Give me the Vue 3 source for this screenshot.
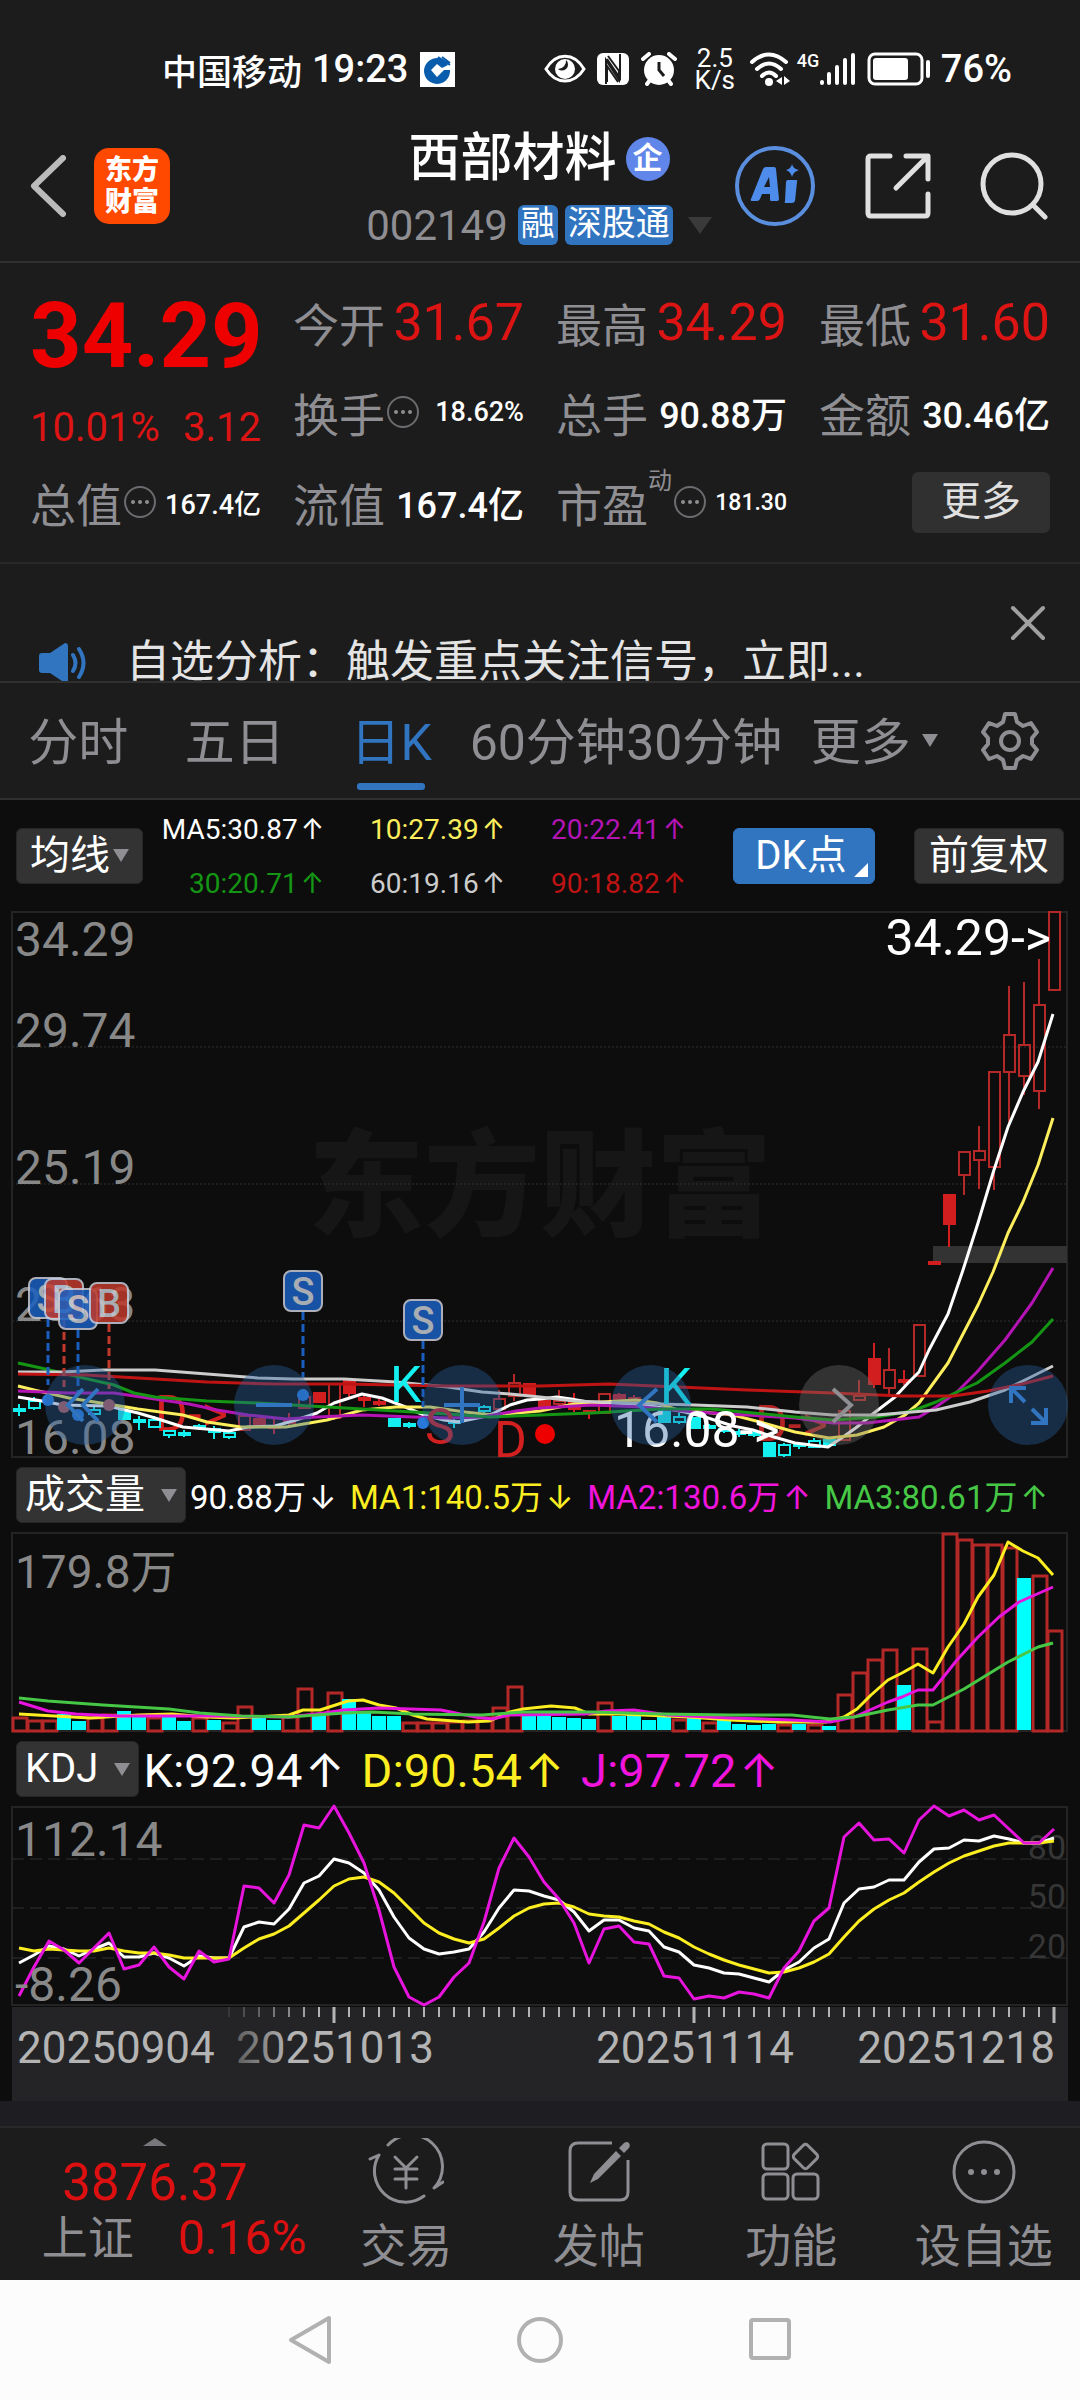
<script setup>
import { computed, ref } from 'vue'

const STEP = 15
const FIRST = 19
const slotX = (i) => FIRST + i * STEP
const toPoints = (list) => list.map(([x, y]) => `${x},${y}`).join(' ')

const quotes = [
  { label: '今开', value: '31.67', tone: 'up', size: 'lg' },
  { label: '最高', value: '34.29', tone: 'up', size: 'lg' },
  { label: '最低', value: '31.60', tone: 'up', size: 'lg' },
  { label: '换手', value: '18.62%', info: true, size: 'sm' },
  { label: '总手', value: '90.88万', size: 'md' },
  { label: '金额', value: '30.46亿', size: 'md' },
  { label: '总值', value: '167.4亿', info: true, size: 'sm' },
  { label: '流值', value: '167.4亿', size: 'md' },
  { label: '市盈', sup: '动', value: '181.30', info: true, size: 'xs' }
]

const tabs = ['分时', '五日', '日K', '60分钟', '30分钟', '更多']
const activeTab = ref('日K')

const averages = [
  { text: 'MA5:30.87', color: '#ffffff' },
  { text: '10:27.39', color: '#fcee5c' },
  { text: '20:22.41', color: '#b414b4' },
  { text: '30:20.71', color: '#149614' },
  { text: '60:19.16', color: '#cccccc' },
  { text: '90:18.82', color: '#c01414' }
]

const priceLabels = [
  { text: '34.29', y: 45 },
  { text: '29.74', y: 136 },
  { text: '25.19', y: 273 },
  { text: '20.63', y: 410 },
  { text: '16.08', y: 543 }
]

const priceLines = [
  { color: '#ffffff', pts: [[18,486],[48,491],[62,494],[108,495],[138,502],[155,507],[183,516],[229,520],[248,516],[275,515],[296,509],[317,502],[334,492],[362,483],[382,487],[403,495],[424,504],[444,509],[458,511],[482,506],[492,503],[510,494],[527,489],[540,488],[557,486],[571,488],[588,491],[612,492],[633,493],[657,496],[685,501],[705,506],[733,515],[753,519],[774,526],[795,532],[828,536],[843,526],[857,516],[874,502],[895,486],[908,472],[919,461],[929,439],[948,403],[963,359],[978,312],[993,262],[1008,216],[1023,181],[1038,151],[1053,103]] },
  { color: '#fcee5c', pts: [[18,475],[34,479],[69,487],[120,495],[138,498],[183,504],[207,511],[241,516],[286,516],[327,509],[362,499],[396,496],[430,496],[465,501],[492,504],[516,502],[540,500],[574,493],[602,491],[636,489],[657,492],[678,499],[702,501],[733,504],[760,511],[795,521],[829,527],[857,524],[884,516],[905,504],[919,492],[948,452],[978,394],[993,361],[1008,322],[1023,291],[1038,254],[1053,207]] },
  { color: '#b414b4', pts: [[18,480],[69,482],[114,482],[148,487],[189,493],[217,499],[248,504],[286,508],[317,506],[362,504],[413,506],[448,507],[482,506],[516,500],[540,497],[592,494],[643,496],[695,501],[747,504],[795,507],[833,512],[867,512],[919,506],[936,496],[957,481],[977,461],[1005,429],[1032,392],[1053,357]] },
  { color: '#149614', pts: [[18,452],[41,457],[79,466],[114,474],[134,482],[155,486],[207,490],[258,492],[310,495],[362,498],[413,501],[448,503],[489,506],[540,504],[592,502],[661,498],[712,498],[753,502],[795,506],[833,509],[877,506],[912,500],[936,491],[957,481],[977,472],[1005,452],[1032,431],[1053,408]] },
  { color: '#cccccc', pts: [[18,461],[62,461],[103,459],[155,459],[207,463],[258,467],[293,468],[344,468],[396,471],[448,476],[482,481],[510,483],[540,486],[574,490],[626,492],[695,494],[747,496],[795,501],[833,504],[877,504],[912,501],[936,499],[970,491],[1005,479],[1029,467],[1053,455]] },
  { color: '#c01414', pts: [[18,463],[86,464],[138,467],[207,471],[275,473],[344,473],[448,475],[540,475],[609,473],[678,476],[747,479],[833,482],[902,485],[953,485],[988,480],[1022,473],[1053,465]] }
]

// [slot, high, bodyTop, bodyBottom, low, kind]: r = rising, R = rising filled, c = falling, C = falling filled
const candles = [
  [0,493,498,500,505,'C'],[1,486,490,497,499,'c'],[5,496,499,503,508,'c'],[7,497,500,508,508,'C'],[8,505,509,511,519,'C'],
  [9,505,509,516,516,'c'],[10,519,520,524,527,'c'],[11,519,522,524,526,'C'],[12,513,515,517,519,'C'],[13,515,518,521,528,'c'],[14,519,522,526,528,'c'],
  [15,502,505,519,519,'r'],[16,505,508,515,515,'R'],[17,507,515,517,523,'R'],[18,502,508,512,514,'R'],[19,478,486,497,497,'r'],[20,481,482,491,491,'R'],
  [21,472,473,507,509,'r'],[22,467,469,482,486,'R'],[23,484,487,489,496,'R'],[24,488,491,493,495,'R'],[25,507,508,515,515,'C'],[26,511,513,515,517,'C'],
  [29,507,510,512,517,'C'],[31,494,496,500,502,'c'],[32,479,488,498,498,'r'],[33,463,472,485,490,'r'],[34,472,473,484,484,'R'],[35,488,490,495,495,'R'],
  [36,479,490,493,497,'r'],[37,482,489,498,501,'R'],[38,499,500,502,508,'R'],[39,482,483,502,502,'r'],[40,482,484,488,490,'R'],[41,484,487,490,492,'R'],
  [43,497,499,511,511,'C'],[44,502,506,511,513,'c'],[45,506,507,517,517,'C'],[46,513,515,517,518,'C'],[47,516,518,520,522,'C'],[48,518,521,523,526,'C'],
  [49,520,522,524,526,'C'],[50,532,532,545,545,'C'],[51,532,534,544,546,'c'],[52,532,533,535,538,'C'],[53,527,530,536,536,'c'],[54,528,529,534,534,'C'],
  [55,498,500,529,529,'r'],[56,469,485,489,489,'r'],[57,432,448,473,477,'R'],[58,437,459,477,483,'r'],[59,459,469,471,474,'R'],[60,413,414,465,465,'r'],
  [61,351,351,353,353,'R'],[62,284,284,313,336,'R'],[63,241,241,264,284,'r'],[64,215,240,249,278,'r'],[65,161,161,256,279,'r'],[66,75,124,161,211,'r'],
  [67,71,134,165,184,'r'],[68,48,94,180,198,'r'],[69,1,1,79,79,'r']
]
const candleColor = (kind) => (kind === 'r' ? '#b42828' : kind === 'R' ? '#d21e1e' : '#14f0f0')

const marks = [
  { x: 48, y: 367, t: 'S', end: 474, dot: 489 },
  { x: 64, y: 368, t: 'B', end: 476, dot: 496 },
  { x: 78, y: 378, t: 'S', end: 482, dot: 504 },
  { x: 109, y: 372, t: 'B', end: 478, dot: 494 },
  { x: 303, y: 360, t: 'S', end: 466, dot: 484 },
  { x: 423, y: 389, t: 'S', end: 496, dot: 512 }
]
const markColor = (t) => (t === 'S' ? '#1a5fc0' : '#c0392b')

const volumeInfo = [
  { text: '90.88万', arrow: '↓', color: '#ffffff' },
  { text: 'MA1:140.5万', arrow: '↓', color: '#fcee21' },
  { text: 'MA2:130.6万', arrow: '↑', color: '#f014dc' },
  { text: 'MA3:80.61万', arrow: '↑', color: '#46c846' }
]
const volY = (v) => Math.round((v - 245) / 3)
const volumes = '800r 808r 808r 790c 812c 800r 790r 783c 797c 800r 797c 812c 800r 808c 815r 768r 800c 810c 797r 713r 790c 725r 745c 785c 797c 797c 815r 815r 815r 812r 808r 800r 770r 707r 797c 797c 800c 802c 805c 755r 797c 795c 808c 797c 805r 803c 815r 810c 822c 825c 820c 820r 820c 820r 828c 732r 665r 627r 597r 705c 592r 812r 247r 267r 280r 282r 290r 383c 375r 540r'
  .split(' ')
  .map((s, i) => ({ x: slotX(i), y: volY(parseInt(s)), up: s.endsWith('r') }))
const volPoints = (list) => toPoints(list.map(([x, y]) => [Math.round(x / 1.452), volY(y)]))
const volumeLines = [
  { color: '#fcee21', pts: volPoints([[27,790],[130,803],[200,795],[250,790],[300,800],[340,803],[420,795],[440,778],[465,778],[505,752],[527,750],[550,765],[575,772],[600,795],[620,805],[680,815],[710,812],[740,785],[760,775],[800,768],[835,772],[855,792],[900,792],[1000,800],[1060,808],[1130,815],[1200,815],[1225,800],[1245,775],[1265,735],[1290,690],[1310,668],[1333,640],[1355,667],[1377,590],[1400,520],[1420,440],[1443,375],[1464,275],[1486,302],[1507,323],[1529,375]]) },
  { color: '#e614dc', pts: volPoints([[27,755],[70,782],[110,790],[170,797],[300,797],[420,800],[470,787],[500,778],[550,773],[640,778],[690,800],[715,805],[740,795],[850,790],[880,782],[920,778],[970,795],[1060,803],[1150,808],[1205,815],[1240,800],[1290,755],[1310,740],[1333,720],[1355,720],[1390,630],[1420,560],[1450,500],[1480,455],[1529,410]]) },
  { color: '#46c846', pts: volPoints([[27,742],[70,752],[150,763],[245,777],[290,788],[350,797],[420,800],[500,788],[540,785],[600,790],[700,793],[760,785],[860,786],[960,790],[1060,795],[1150,795],[1205,805],[1240,800],[1290,778],[1333,765],[1355,765],[1400,715],[1464,635],[1507,590],[1529,577]]) }
]

const kdjInfo = [
  { text: 'K:92.94', color: '#ffffff' },
  { text: 'D:90.54', color: '#fcee21' },
  { text: 'J:97.72', color: '#f014dc' }
]
const kdjPoints = (list) => toPoints(list.map((v, i) => [slotX(i), Math.round((v - 198) / 3)]))
const kdjLines = [
  { color: '#ffffff', pts: kdjPoints([670,645,618,628,648,628,608,652,652,640,655,678,648,655,655,560,546,552,508,430,407,357,370,400,450,530,595,627,642,636,627,575,505,450,453,467,480,515,572,541,540,563,572,622,635,675,685,698,703,715,726,690,667,625,598,490,447,440,420,420,365,328,324,300,302,288,297,308,308,293]) },
  { color: '#fcee21', pts: kdjPoints([625,632,628,630,633,632,625,633,638,640,645,654,655,655,653,625,598,582,558,518,480,438,417,412,425,460,505,550,580,597,608,598,565,527,503,491,490,500,522,527,531,543,552,577,595,622,642,660,675,688,698,696,685,665,643,590,543,508,480,458,427,395,370,347,332,318,310,308,308,302]) },
  { color: '#e614dc', pts: kdjPoints([768,680,602,630,670,625,580,688,675,622,680,718,632,665,658,438,443,490,405,255,265,198,278,370,510,680,770,795,770,710,668,545,385,295,350,425,478,550,670,567,557,605,612,708,714,778,768,773,755,762,773,685,632,543,505,290,250,300,298,338,240,198,228,210,240,225,268,308,308,268]) }
]

const ticks = computed(() =>
  Array.from({ length: 56 }, (_, k) => k + 14).map((i) => ({
    x: slotX(i),
    long: [21, 45, 69].includes(i),
    o: Math.min(1, (i - 13) / 7)
  }))
)
</script>

<template>
  <div class="page">
    <div class="status">
      <span class="carrier">中国移动</span>
      <span class="time">19:23</span>
      <svg class="bank" width="35" height="35" viewBox="0 0 35 35">
        <rect width="35" height="35" fill="#fff" />
        <path d="M24 8A13 13 0 1 0 30 18L24 18L17 25L11 18L17 12L22 16L28 13Z" fill="#0a5cad" />
        <path d="M18 5L30 13M22 5L30 11" stroke="#0a5cad" stroke-width="2" />
      </svg>
      <div class="sys">
        <svg width="42" height="30" viewBox="0 0 42 30">
          <path d="M2 15C12-2 30-2 40 15C30 31 12 31 2 15Z" fill="none" stroke="#fff" stroke-width="3" />
          <circle cx="21" cy="15" r="10" fill="#fff" />
          <path d="M22 6A6 6 0 1 1 14 15A8 8 0 0 0 22 6Z" fill="#1c1c1c" />
        </svg>
        <svg class="nfc" width="32" height="32" viewBox="0 0 32 32">
          <rect width="32" height="32" rx="6" fill="#fff" />
          <path d="M9 31V7L22 27V18L11 3M23 1V25L10 6M21 29L10 13V29" fill="none" stroke="#1c1c1c" stroke-width="2" />
        </svg>
        <svg class="alarm" width="36" height="34" viewBox="0 0 36 34">
          <circle cx="18" cy="18" r="15" fill="#fff" />
          <path d="M2 7L8 2M34 7L28 2M6 32L9 28M30 32L27 28" stroke="#fff" stroke-width="4" stroke-linecap="round" />
          <path d="M18 10V18L23 24" fill="none" stroke="#1c1c1c" stroke-width="3" />
        </svg>
        <span class="rate"><span>2.5</span><span>K/s</span></span>
        <svg class="wifi" width="42" height="36" viewBox="0 0 42 36">
          <g fill="none" stroke="#fff" stroke-width="4" stroke-linecap="round">
            <path d="M3 11Q20-4 37 11" /><path d="M8 18Q20 7 32 18" /><path d="M13 25Q20 18 27 25" />
          </g>
          <circle cx="20" cy="31" r="4" fill="#fff" />
          <path d="M33 26V34L27 30ZM35 34V25L41 30Z" fill="#fff" />
        </svg>
        <span class="net">4G</span>
        <svg width="36" height="34" viewBox="0 0 36 34">
          <path d="M3 30V31M10 22V31M18 15V31M26 8V31M34 3V31" stroke="#fff" stroke-width="4" stroke-linecap="round" />
        </svg>
        <svg class="battery" width="64" height="34" viewBox="0 0 64 34">
          <rect x="2" y="2" width="53" height="30" rx="6" fill="none" stroke="#fff" stroke-width="3" />
          <rect x="6" y="6" width="35" height="22" rx="3" fill="#fff" />
          <path d="M61 10V24" stroke="#fff" stroke-width="4" stroke-linecap="round" />
        </svg>
        <span class="pct">76%</span>
      </div>
    </div>

    <header class="head">
      <div class="head-left">
        <button class="plain" aria-label="返回">
          <svg width="36" height="62" viewBox="0 0 36 62"><path d="M33 3L4 31L33 59" fill="none" stroke="#bbb" stroke-width="6" stroke-linecap="round" stroke-linejoin="round" /></svg>
        </button>
        <a class="logo" href="#"><span>东方</span><span>财富</span></a>
      </div>
      <div class="title">
        <h1>西部材料<span class="corp">企</span></h1>
        <div class="code"><span class="num">002149</span><span class="tag">融</span><span class="tag">深股通</span><i class="tri"></i></div>
      </div>
      <div class="head-right">
        <button class="plain" aria-label="Ai">
          <svg width="82" height="82" viewBox="0 0 82 82">
            <circle cx="41" cy="41" r="38" fill="none" stroke="#5a8fe0" stroke-width="4" />
            <path d="M17 54L29 24Q30 22 32 22H40Q42 22 42 24L45 54Q45 56 43 56H37Q36 56 36 54V49H28L26 54Q25 56 23 56H18Q16 56 17 54ZM30 42H36L35 32Z" fill="#4e8cec" />
            <path d="M54 35H62Q64 35 63 37L61 56Q60 58 58 58H52Q50 58 51 56L52 37Q52 35 54 35ZM58 19Q59 24 65 25Q59 27 58 32Q57 27 52 25Q57 24 58 19Z" fill="#4e8cec" />
          </svg>
        </button>
        <button class="plain" aria-label="分享">
          <svg width="66" height="66" viewBox="0 0 66 66"><path d="M25 3H6Q3 3 3 6V60Q3 63 6 63H60Q63 63 63 60V41M41 3H63V26M62 4L31 35" fill="none" stroke="#e0e0e0" stroke-width="5" stroke-linecap="round" stroke-linejoin="round" /></svg>
        </button>
        <button class="plain" aria-label="搜索">
          <svg width="68" height="68" viewBox="0 0 68 68"><circle cx="32" cy="32" r="29" fill="none" stroke="#e0e0e0" stroke-width="5" /><path d="M53 53L65 65" stroke="#e0e0e0" stroke-width="5" stroke-linecap="round" /></svg>
        </button>
      </div>
    </header>

    <section class="quote">
      <div class="price">
        <strong>34.29</strong>
        <div class="change"><span>10.01%</span><span>3.12</span></div>
      </div>
      <div v-for="(q, i) in quotes" :key="i" class="cell">
        <span class="label">{{ q.label }}<sup v-if="q.sup">{{ q.sup }}</sup></span>
        <svg v-if="q.info" class="info" width="34" height="34" viewBox="0 0 34 34">
          <circle cx="17" cy="17" r="15" fill="none" stroke="#6c6c70" stroke-width="2" />
          <g fill="#8e8e93"><circle cx="10" cy="17" r="2" /><circle cx="17" cy="17" r="2" /><circle cx="24" cy="17" r="2" /></g>
        </svg>
        <span class="value" :class="[q.size, q.tone]">{{ q.value }}</span>
      </div>
      <div class="cell"><button class="more">更多</button></div>
    </section>

    <section class="notice">
      <svg class="speaker" width="50" height="40" viewBox="0 0 50 40">
        <path d="M3 10H11L26 0Q29 0 29 3V37Q29 40 26 40L11 30H3Q0 30 0 27V13Q0 10 3 10Z" fill="#3174c0" />
        <path d="M34 12Q39 20 34 28M40 6Q49 20 40 34" fill="none" stroke="#3174c0" stroke-width="4" stroke-linecap="round" />
      </svg>
      <a class="notice-text" href="#">自选分析：触发重点关注信号，立即...</a>
      <button class="plain close" aria-label="关闭">
        <svg width="36" height="36" viewBox="0 0 36 36"><path d="M3 3L33 33M33 3L3 33" stroke="#a0a0a0" stroke-width="4" stroke-linecap="round" /></svg>
      </button>
    </section>

    <nav class="tabs">
      <button v-for="t in tabs" :key="t" class="tab" :class="{ on: t === activeTab }" @click="activeTab = t">
        {{ t }}<i v-if="t === '更多'" class="caret"></i>
      </button>
      <button class="gear" aria-label="设置">
        <svg width="60" height="60" viewBox="0 0 60 60" fill="none" stroke="#8e8e93" stroke-width="4" stroke-linejoin="round">
          <path d="M25 3H35L37 11L43 15L51 12L57 21L52 27V33L57 39L51 48L43 45L37 49L35 57H25L23 49L17 45L9 48L3 39L8 33V27L3 21L9 12L17 15L23 11Z" />
          <circle cx="30" cy="30" r="9" />
        </svg>
      </button>
    </nav>

    <main class="board">
      <div class="ma-bar">
        <button class="chip ma">均线<i class="drop"></i></button>
        <div class="ma-grid">
          <span v-for="m in averages" :key="m.text" :style="{ color: m.color }">{{ m.text }}<b class="arr">↑</b></span>
        </div>
        <button class="chip dk">DK点</button>
        <button class="chip right">前复权</button>
      </div>

      <div class="chart">
        <svg class="plot" viewBox="0 0 1080 547">
          <text class="mark-water" x="540" y="316" text-anchor="middle">东方财富</text>
          <g stroke="#303030" stroke-width="1" stroke-dasharray="2 2"><path d="M12 136H1067M12 273H1067M12 410H1067" /></g>
          <rect x="12" y="1" width="1055" height="545" fill="none" stroke="#242424" stroke-width="2" />
          <rect x="933" y="335" width="134" height="17" fill="#333" />
          <g class="axis"><text v-for="l in priceLabels" :key="l.text" x="15" :y="l.y">{{ l.text }}</text></g>
          <g class="sig">
            <text x="155" y="520" fill="#d22020">D-&gt;</text>
            <text x="755" y="530" fill="#b42424">D-&gt;</text>
          </g>
          <g v-for="c in candles" :key="c[0]" :stroke="candleColor(c[5])" stroke-width="2" :fill="c[5] === 'R' || c[5] === 'C' ? candleColor(c[5]) : 'none'">
            <path :d="`M${slotX(c[0])} ${c[1]}V${c[2]}M${slotX(c[0])} ${c[3]}V${c[4]}`" />
            <rect :x="slotX(c[0]) - 5" :y="c[2]" width="11" :height="c[3] - c[2]" />
          </g>
          <polyline v-for="l in priceLines" :key="l.color" :points="toPoints(l.pts)" fill="none" :stroke="l.color" stroke-width="3" stroke-linejoin="round" />
          <g v-for="m in marks" :key="m.x">
            <path :d="`M${m.x} ${m.y + 41}V${m.end}`" :stroke="markColor(m.t)" stroke-width="3" stroke-dasharray="8 4" />
            <circle :cx="m.x" :cy="m.dot" r="6" :fill="m.t === 'S' ? '#2878dc' : '#b45a5a'" />
            <g opacity="0.85">
              <rect :x="m.x - 19" :y="m.y" width="38" height="40" rx="7" :fill="markColor(m.t)" stroke="#c8ccd8" stroke-width="2" />
              <text class="badge" :x="m.x" :y="m.y + 34" text-anchor="middle">{{ m.t }}</text>
            </g>
          </g>
          <g class="sig">
            <text x="390" y="491" fill="#14f0f0">K</text>
            <text x="660" y="493" fill="#14f0f0">K</text>
            <text x="425" y="533" fill="#d22020">S</text>
            <text x="494" y="546" fill="#d22020">D</text>
            <circle cx="545" cy="523" r="10" fill="#ee0000" />
            <text x="614" y="536" fill="#fff">16.08-&gt;</text>
            <text x="1051" y="44" text-anchor="end" fill="#fff">34.29-&gt;</text>
          </g>
        </svg>
        <div class="tools">
          <button aria-label="快退"><svg viewBox="0 0 80 80"><path d="M38 24L23 40L38 56M53 24L38 40L53 56" /></svg></button>
          <button aria-label="缩小"><svg viewBox="0 0 80 80"><path d="M22 40H58" /></svg></button>
          <button aria-label="放大"><svg viewBox="0 0 80 80"><path d="M22 40H58M40 22V58" /></svg></button>
          <button aria-label="左移"><svg viewBox="0 0 80 80"><path d="M46 24L28 40L46 57" /></svg></button>
          <button aria-label="右移" class="dim"><svg viewBox="0 0 80 80"><path d="M34 24L52 40L34 57" /></svg></button>
          <button aria-label="全屏"><svg viewBox="0 0 80 80"><path d="M23 38V23H38M24 24L37 37M58 43V58H43M57 57L44 44" /></svg></button>
        </div>
      </div>

      <div class="ind-bar">
        <button class="chip ind">成交量<i class="drop"></i></button>
        <div class="vol-list"><span v-for="v in volumeInfo" :key="v.text" :style="{ color: v.color }">{{ v.text }}<b class="arr">{{ v.arrow }}</b></span></div>
      </div>
      <svg class="plot" viewBox="0 0 1080 200">
        <rect x="12" y="1" width="1055" height="198" fill="none" stroke="#242424" stroke-width="2" />
        <g class="axis amount"><text x="15" y="56">179.8万</text></g>
        <template v-for="v in volumes" :key="v.x">
          <rect v-if="v.up" :x="v.x - 6" :y="v.y + 1" width="14" :height="198 - v.y" fill="none" stroke="#b42828" stroke-width="3" />
          <rect v-else :x="v.x - 7" :y="v.y" width="14" :height="198 - v.y" fill="#00ffff" />
        </template>
        <polyline v-for="l in volumeLines" :key="l.color" :points="l.pts" fill="none" :stroke="l.color" stroke-width="3" stroke-linejoin="round" />
      </svg>

      <div class="ind-bar">
        <button class="chip ind">KDJ<i class="drop"></i></button>
        <div class="kdj-list"><span v-for="k in kdjInfo" :key="k.text" :style="{ color: k.color }">{{ k.text }}<b class="arr">↑</b></span></div>
      </div>
      <svg class="plot" viewBox="0 0 1080 201">
        <rect x="12" y="1" width="1055" height="198" fill="none" stroke="#242424" stroke-width="2" />
        <path d="M12 53H1067M12 102H1067M12 152H1067" stroke="#303030" stroke-width="1" stroke-dasharray="12 6" />
        <g class="level"><text x="1066" y="53">80</text><text x="1066" y="102">50</text><text x="1066" y="152">20</text></g>
        <g class="axis"><text x="15" y="50">112.14</text></g>
        <polyline v-for="l in kdjLines" :key="l.color" :points="l.pts" fill="none" :stroke="l.color" stroke-width="3" stroke-linejoin="round" />
        <g class="axis"><text x="15" y="195">-8.26</text></g>
      </svg>
      <svg class="plot" viewBox="0 0 1080 94">
        <defs>
          <linearGradient id="fade" gradientUnits="userSpaceOnUse" x1="225" y1="0" x2="290" y2="0">
            <stop offset="0" stop-color="#4c4c4e" /><stop offset="1" stop-color="#b4b4b4" />
          </linearGradient>
        </defs>
        <rect x="12" y="0" width="1056" height="94" fill="#242426" />
        <path v-for="t in ticks" :key="t.x" :d="`M${t.x} 0V${t.long ? 16 : 10}`" stroke="#b4b4b4" :stroke-width="t.long ? 3 : 2" :opacity="t.o" />
        <g class="date">
          <text x="17" y="56">20250904</text>
          <text x="335" y="56" text-anchor="middle" fill="url(#fade)">20251013</text>
          <text x="695" y="56" text-anchor="middle">20251114</text>
          <text x="1055" y="56" text-anchor="end">20251218</text>
        </g>
      </svg>
    </main>

    <div class="gap"></div>

    <nav class="dock">
      <a class="index" href="#">
        <i class="peak"></i>
        <span class="points">3876.37</span>
        <span class="index-row"><span class="name">上证</span><span class="rise">0.16%</span></span>
      </a>
      <a class="item" href="#">
        <svg width="76" height="68" viewBox="0 0 76 68" fill="none" stroke="#8e8e93" stroke-width="3" stroke-linecap="round" stroke-linejoin="round">
          <path d="M20 7A31 31 0 0 1 66 50L75 44M56 58A31 31 0 0 1 11 17L2 21" /><path d="M27 19L38 30L49 19M27 31H49M27 41H49M38 30V50" />
        </svg>
        <span>交易</span>
      </a>
      <a class="item" href="#">
        <svg width="64" height="68" viewBox="0 0 64 68">
          <path d="M45 5H11Q3 5 3 13V54Q3 62 11 62H53Q61 62 61 54V22" fill="none" stroke="#8e8e93" stroke-width="3" />
          <path d="M49 13L54 18L31 41L23 45L27 36ZM52 10L57 5Q60 3 62 5Q64 8 61 11L57 15Z" fill="#8e8e93" />
        </svg>
        <span>发帖</span>
      </a>
      <a class="item" href="#">
        <svg width="60" height="68" viewBox="0 0 60 68" fill="none" stroke="#8e8e93" stroke-width="3" stroke-linejoin="round">
          <rect x="2" y="6" width="25" height="25" rx="4" /><rect x="2" y="36" width="25" height="25" rx="4" /><rect x="32" y="36" width="25" height="25" rx="4" />
          <rect x="35" y="9" width="19" height="19" rx="3" transform="rotate(45 44.5 18.5)" />
        </svg>
        <span>功能</span>
      </a>
      <a class="item" href="#">
        <svg width="64" height="68" viewBox="0 0 64 68"><circle cx="32" cy="34" r="30" fill="none" stroke="#8e8e93" stroke-width="3" /><g fill="#8e8e93"><circle cx="19" cy="34" r="3" /><circle cx="32" cy="34" r="3" /><circle cx="45" cy="34" r="3" /></g></svg>
        <span>设自选</span>
      </a>
    </nav>

    <div class="sysnav">
      <button class="plain" aria-label="后退"><svg width="48" height="52" viewBox="0 0 48 52"><path d="M43 4V48L5 26Z" fill="none" stroke="#b1b1b1" stroke-width="4" stroke-linejoin="round" /></svg></button>
      <button class="plain" aria-label="主页"><svg width="48" height="52" viewBox="0 0 48 52"><circle cx="24" cy="26" r="21" fill="none" stroke="#b1b1b1" stroke-width="4" /></svg></button>
      <button class="plain" aria-label="最近"><svg width="48" height="52" viewBox="0 0 48 52"><rect x="5" y="6" width="38" height="38" rx="2" fill="none" stroke="#b1b1b1" stroke-width="4" /></svg></button>
    </div>
  </div>
</template>

<style>
body { background: #1c1c1c; }
</style>

<style scoped>
.page { width: 100%; background: #1c1c1c; color: #fff; font-family: Roboto, "Noto Sans CJK SC", sans-serif; overflow: hidden; }
.page * { box-sizing: border-box; }
.page svg { display: block; flex: none; }
button { font-family: inherit; color: inherit; border: 0; margin: 0; padding: 0; background: none; cursor: pointer; white-space: nowrap; }
a { color: inherit; text-decoration: none; }
i { font-style: normal; }

.status { display: flex; align-items: center; height: 110px; padding: 28px 68px 0 162px; font-weight: 500; white-space: nowrap; }
.carrier { font-size: 35px; }
.time { font-size: 38px; margin-left: 10px; }
.bank { margin-left: 12px; }
.sys { display: flex; align-items: center; margin-left: auto; }
.nfc { margin-left: 11px; }
.alarm { margin-left: 12px; }
.rate { display: flex; flex-direction: column; align-items: center; width: 40px; margin-left: 18px; font-size: 26px; line-height: 22px; font-weight: 400; }
.wifi { margin-left: 14px; }
.net { width: 22px; height: 34px; margin-left: 6px; font-size: 18px; line-height: 18px; }
.battery { margin-left: 12px; }
.pct { margin-left: 10px; font-size: 38px; }

.head { display: grid; grid-template-columns: 1fr auto 1fr; align-items: center; height: 153px; padding: 0 32px 0 30px; border-bottom: 2px solid #303030; }
.head-left { display: flex; align-items: center; gap: 28px; }
.logo { display: flex; flex-direction: column; align-items: center; justify-content: center; width: 76px; height: 76px; border-radius: 15px; background: #ff4800; font-size: 27px; line-height: 32px; font-weight: 900; }
.title { display: flex; flex-direction: column; align-items: center; padding-top: 9px; }
h1 { display: flex; align-items: center; gap: 9px; margin: 0; font-size: 52px; line-height: 70px; font-weight: 500; }
.corp { width: 44px; height: 44px; border-radius: 50%; background: #5f86e8; font-size: 30px; line-height: 42px; text-align: center; font-weight: 700; }
.code { display: flex; align-items: center; gap: 7px; height: 62px; }
.num { font-size: 42px; color: #8e8e93; margin-right: 3px; }
.tag { height: 40px; padding: 0 3px; border-radius: 6px; background: #3174c0; font-size: 34px; line-height: 37px; }
.tri { border: 12px solid transparent; border-top: 17px solid #3a3a3a; border-bottom: 0; margin-left: 8px; }
.head-right { display: flex; align-items: center; justify-content: flex-end; gap: 49px; }

.quote { display: grid; grid-template-columns: repeat(4, minmax(0, 1fr)); grid-auto-rows: 90px; column-gap: 32px; padding: 14px 30px 15px; border-bottom: 2px solid #282828; }
.price { grid-row: span 2; color: #ee0000; padding-top: 12px; }
.price strong { display: block; font-size: 90px; line-height: 96px; font-weight: 700; white-space: nowrap; }
.change { display: flex; justify-content: space-between; margin-top: 19px; font-size: 40px; line-height: 48px; color: #dc1414; }
.cell { display: flex; align-items: center; white-space: nowrap; }
.label { position: relative; font-size: 46px; color: #8e8e93; }
.label sup { font-size: 24px; line-height: 24px; vertical-align: top; }
.info { margin-left: 1px; }
.value { margin-left: auto; }
.value.lg { font-size: 52px; }
.value.md { font-size: 36px; font-weight: 500; }
.value.sm { font-size: 27px; font-weight: 500; }
.value.xs { font-size: 23px; font-weight: 500; }
.value.up { color: #dc1414; }
.more { width: 138px; height: 61px; margin-left: auto; border-radius: 6px; background: #303030; color: #e0e0e0; font-size: 40px; line-height: 58px; }

.notice { display: flex; align-items: flex-start; height: 119px; padding: 0 34px 0 39px; overflow: hidden; border-bottom: 2px solid #303030; }
.speaker { margin-top: 79px; }
.notice-text { flex: 1; margin: 73px 0 0 37px; font-size: 44px; line-height: 50px; color: #e4e4e4; white-space: nowrap; }
.close { margin-top: 41px; }

.tabs { display: flex; height: 117px; border-bottom: 2px solid #303030; }
.tab { position: relative; flex: 1 1 0; min-width: 0; padding-bottom: 6px; font-size: 50px; color: #8e8e93; }
.tab.on { color: #3174c0; }
.tab.on::after { content: ""; position: absolute; left: 50%; bottom: 8px; width: 68px; height: 7px; margin-left: -34px; border-radius: 3px; background: #3174c0; }
.caret { position: absolute; left: 100%; top: 51px; margin-left: -17px; border: 8px solid transparent; border-top: 13px solid #8e8e93; border-bottom: 0; }
.gear { display: flex; align-items: center; justify-content: center; width: 141px; }

.board { background: #0d0d0d; }
.ma-bar { display: flex; align-items: center; height: 111px; padding: 0 16px; }
.chip { display: flex; flex: none; align-items: center; justify-content: center; height: 56px; border-radius: 6px; border: 1px solid #262626; background: #333; font-size: 40px; line-height: 52px; padding: 0 11px; }
.drop { border: 8px solid transparent; border-top: 13px solid #8e8e93; border-bottom: 0; }
.ma { width: 127px; gap: 3px; }
.dk { position: relative; width: 142px; margin-left: 47px; padding-right: 17px; background: #3174c0; border-color: #3174c0; }
.dk::after { content: ""; position: absolute; right: 6px; bottom: 6px; border-left: 14px solid transparent; border-bottom: 14px solid #fff; }
.right { width: 150px; margin-left: auto; }
.ma-grid { display: grid; flex: 0 1 543px; grid-template-columns: repeat(3, 1fr); grid-auto-rows: 54px; align-items: center; justify-items: end; font-size: 28px; white-space: nowrap; }
.arr { font-family: Inter, "DejaVu Sans", sans-serif; font-weight: 400; margin-left: 3px; }
.chart { position: relative; }
.page .plot { width: 100%; height: auto; overflow: visible; }
.axis text { font-size: 48px; fill: #888; }
.amount text { font-size: 46px; }
.sig text { font-size: 50px; }
.mark-water { font-size: 116px; font-weight: 900; fill: #161616; }
.badge { font-size: 38px; font-weight: 500; fill: #c4c8d0; }
.level text { font-size: 34px; fill: #363636; text-anchor: end; }
.date { font-size: 44px; fill: #b4b4b4; }
.tools { position: absolute; left: 0; right: 0; bottom: 13px; display: flex; justify-content: space-between; padding: 0 12px 0 45px; }
.tools button { width: 80px; height: 80px; border-radius: 50%; background: rgba(40, 96, 160, 0.38); }
.tools svg { width: 80px; height: 80px; fill: none; stroke: #3174c0; stroke-width: 4; }
.tools .dim { background: rgba(110, 110, 110, 0.38); }
.tools .dim svg { stroke: #8e8e93; }

.ind-bar { display: flex; align-items: center; height: 74px; padding: 0 16px; white-space: nowrap; }
.ind { gap: 16px; padding: 0 8px; margin-right: 4px; }
.vol-list { display: flex; flex: 1; justify-content: space-between; padding-right: 16px; font-size: 33px; }
.kdj-list { display: flex; gap: 17px; font-size: 47px; }

.gap { height: 27px; background: #1e1d22; border-bottom: 2px solid #282828; }
.dock { display: flex; height: 152px; color: #8e8e93; }
.index { display: flex; flex-direction: column; align-items: center; width: 310px; padding-top: 10px; }
.peak { border: 12px solid transparent; border-bottom: 8px solid #77777c; border-top: 0; }
.points { font-size: 51px; line-height: 74px; color: #dc1010; }
.index-row { display: flex; align-items: center; gap: 44px; line-height: 36px; padding-left: 38px; }
.name { font-size: 46px; }
.rise { font-size: 48px; color: #dc1010; }
.item { display: flex; flex: 1; flex-direction: column; align-items: center; padding-top: 10px; font-size: 46px; line-height: 80px; }
.sysnav { display: flex; align-items: center; justify-content: center; gap: 182px; height: 120px; background: #fcfcfc; }
</style>
